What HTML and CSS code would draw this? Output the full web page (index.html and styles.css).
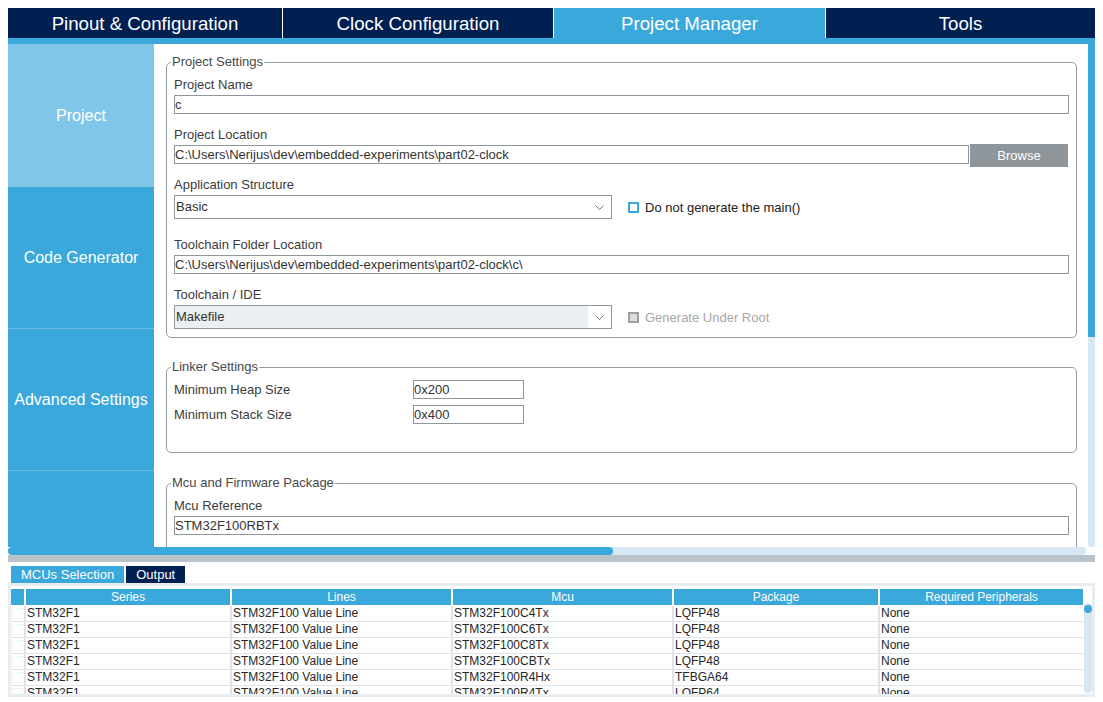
FILE: index.html
```html
<!DOCTYPE html>
<html lang="en">
<head>
<meta charset="utf-8">
<title>Project Manager</title>
<link rel="stylesheet" href="styles.css">
</head>
<body>
<div class="app">
  <nav class="tabs">
    <div class="tab">Pinout &amp; Configuration</div>
    <div class="tab">Clock Configuration</div>
    <div class="tab active">Project Manager</div>
    <div class="tab">Tools</div>
  </nav>
  <div class="strip"></div>

  <div class="workspace">
    <aside class="side">
      <div class="side-item active">Project</div>
      <div class="side-item">Code Generator</div>
      <div class="side-item">Advanced Settings</div>
      <div class="side-item last"></div>
    </aside>

    <main class="panel">
      <fieldset class="fs fs-project">
        <legend>Project Settings</legend>
        <div class="field">
          <label class="lbl">Project Name</label>
          <input class="text" type="text" value="c">
        </div>
        <div class="field">
          <label class="lbl">Project Location</label>
          <div class="row">
            <input class="text grow" type="text" value="C:\Users\Nerijus\dev\embedded-experiments\part02-clock">
            <button class="browse">Browse</button>
          </div>
        </div>
        <div class="field field-tall">
          <label class="lbl">Application Structure</label>
          <div class="option-row">
            <div class="select">
              <span class="select-value">Basic</span>
              <span class="select-arrow"><svg width="9" height="5" viewBox="0 0 9 5"><polyline points="0.5,0.5 4.5,4.5 8.5,0.5" fill="none" stroke="#707070" stroke-width="1"/></svg></span>
            </div>
            <span class="check-label"><span class="check"></span>Do not generate the main()</span>
          </div>
        </div>
        <div class="field">
          <label class="lbl">Toolchain Folder Location</label>
          <input class="text" type="text" value="C:\Users\Nerijus\dev\embedded-experiments\part02-clock\c\">
        </div>
        <div class="field last">
          <label class="lbl">Toolchain / IDE</label>
          <div class="option-row">
            <div class="select disabled">
              <span class="select-value">Makefile</span>
              <span class="select-arrow"><svg width="9" height="5" viewBox="0 0 9 5"><polyline points="0.5,0.5 4.5,4.5 8.5,0.5" fill="none" stroke="#707070" stroke-width="1"/></svg></span>
            </div>
            <span class="check-label off"><span class="check off"></span>Generate Under Root</span>
          </div>
        </div>
      </fieldset>

      <fieldset class="fs fs-linker">
        <legend>Linker Settings</legend>
        <div class="linker">
          <span class="lbl">Minimum Heap Size</span>
          <input class="text" type="text" value="0x200">
          <span class="lbl">Minimum Stack Size</span>
          <input class="text" type="text" value="0x400">
        </div>
      </fieldset>

      <fieldset class="fs fs-mcu">
        <legend>Mcu and Firmware Package</legend>
        <div class="field last">
          <label class="lbl">Mcu Reference</label>
          <input class="text" type="text" value="STM32F100RBTx">
        </div>
      </fieldset>
    </main>

    <div class="vscroll">
      <div class="vthumb"></div>
      <div class="vtrack"></div>
    </div>
  </div>

  <div class="hscroll"><div class="hthumb"></div></div>
  <div class="graybar"></div>

  <section class="bottom">
    <div class="btabs">
      <div class="btab">MCUs Selection</div>
      <div class="btab active">Output</div>
    </div>
    <div class="frame">
      <div class="frame-inner">
        <div class="table">
          <div class="grid thead">
            <div class="th"></div>
            <div class="th">Series</div>
            <div class="th">Lines</div>
            <div class="th">Mcu</div>
            <div class="th">Package</div>
            <div class="th">Required Peripherals</div>
          </div>
          <div class="grid tbody">
            <div class="td chk"><span class="box"></span></div><div class="td">STM32F1</div><div class="td">STM32F100 Value Line</div><div class="td">STM32F100C4Tx</div><div class="td">LQFP48</div><div class="td">None</div>
            <div class="td chk"><span class="box"></span></div><div class="td">STM32F1</div><div class="td">STM32F100 Value Line</div><div class="td">STM32F100C6Tx</div><div class="td">LQFP48</div><div class="td">None</div>
            <div class="td chk"><span class="box"></span></div><div class="td">STM32F1</div><div class="td">STM32F100 Value Line</div><div class="td">STM32F100C8Tx</div><div class="td">LQFP48</div><div class="td">None</div>
            <div class="td chk"><span class="box"></span></div><div class="td">STM32F1</div><div class="td">STM32F100 Value Line</div><div class="td">STM32F100CBTx</div><div class="td">LQFP48</div><div class="td">None</div>
            <div class="td chk"><span class="box"></span></div><div class="td">STM32F1</div><div class="td">STM32F100 Value Line</div><div class="td">STM32F100R4Hx</div><div class="td">TFBGA64</div><div class="td">None</div>
            <div class="td chk"><span class="box"></span></div><div class="td">STM32F1</div><div class="td">STM32F100 Value Line</div><div class="td">STM32F100R4Tx</div><div class="td">LQFP64</div><div class="td">None</div>
          </div>
        </div>
        <div class="tscroll">
          <div class="ttrack"><span class="tdot"></span></div>
        </div>
      </div>
    </div>
  </section>
</div>
</body>
</html>
```

FILE: styles.css
```css
html {
  overflow: hidden;
}

body {
  margin: 8px;
  background: #ffffff;
  font-family: "Liberation Sans", Arial, sans-serif;
  color: #333333;
}

.app {
  width: 1087px;
}

/* Top tabs */
.tabs {
  display: grid;
  grid-template-columns: 274px 270px 271px 1fr;
  column-gap: 1px;
  height: 30px;
  background: #ffffff;
}

.tab {
  background: #002052;
  color: #ffffff;
  font-size: 14pt;
  padding-top: 1px;
  display: flex;
  align-items: center;
  justify-content: center;
  white-space: nowrap;
}

.tab.active {
  background: #3aa8db;
}

.strip {
  height: 6px;
  background: #3aa8db;
}

/* Workspace */
.workspace {
  display: flex;
  height: 503px;
}

.side {
  width: 146px;
  flex: none;
  background: #3aa8db;
  display: flex;
  flex-direction: column;
}

.side-item {
  height: 140px;
  flex: none;
  border-bottom: 1px solid #6bbde5;
  padding-top: 1px;
  box-sizing: content-box;
  color: #ffffff;
  font-size: 16px;
  display: flex;
  align-items: center;
  justify-content: center;
  white-space: nowrap;
}

.side-item.active {
  height: 141px;
  background: #7fc6e9;
  border-bottom-color: #7fc6e9;
}

.side-item.last {
  flex: 1;
  border-bottom: 0;
}

.panel {
  flex: 1;
  min-width: 0;
  background: #ffffff;
  padding: 10px 10px 0 12px;
  overflow: hidden;
}

.vscroll {
  width: 8px;
  flex: none;
  display: flex;
  flex-direction: column;
  background: #ffffff;
}

.vthumb {
  height: 293px;
  margin-left: 1px;
  background: #3aa8db;
}

.vtrack {
  flex: 1;
  margin-left: 1px;
  background: #d7e8f4;
  border-radius: 0 0 4px 4px;
}

/* Fieldsets */
.fs {
  margin: 0;
  min-width: 0;
  border: 1px solid #979ea3;
  border-radius: 5px;
  padding: 7px 7px 8px;
}

.fs legend {
  padding: 0 1px;
  margin-left: -3px;
  font-size: 13px;
  line-height: 16px;
  color: #484848;
}

.fs-linker {
  margin-top: 21px;
  padding-top: 5px;
  padding-bottom: 28px;
}

.fs-mcu {
  margin-top: 22px;
  padding-bottom: 40px;
}

.field {
  margin-bottom: 13px;
}

.field.field-tall {
  margin-bottom: 18px;
}

.field.last {
  margin-bottom: 0;
}

.lbl {
  display: block;
  font-size: 13px;
  line-height: 16px;
  margin-bottom: 2px;
  color: #3c3c3c;
  white-space: nowrap;
}

.linker .lbl {
  margin-bottom: 0;
}

.text {
  display: block;
  width: 100%;
  height: 19px;
  box-sizing: border-box;
  margin: 0;
  border: 1px solid #8e969a;
  border-radius: 0;
  padding: 0 1px 0 0;
  font-family: "Liberation Sans", Arial, sans-serif;
  font-size: 13px;
  color: #333333;
  background: #ffffff;
  outline: none;
}

.row {
  display: flex;
  align-items: flex-start;
}

.text.grow {
  flex: 1;
  width: auto;
  min-width: 0;
}

.browse {
  width: 98px;
  height: 23px;
  margin: -1px 1px -3px 1px;
  padding: 0;
  border: 0;
  background: #8f969b;
  color: #ffffff;
  font-family: "Liberation Sans", Arial, sans-serif;
  font-size: 13px;
}

.option-row {
  display: flex;
  align-items: center;
}

.select {
  display: flex;
  width: 438px;
  height: 24px;
  box-sizing: border-box;
  border: 1px solid #8e969a;
  background: #ffffff;
}

.select-value {
  flex: 1;
  padding-left: 1px;
  font-size: 13px;
  line-height: 22px;
  color: #333333;
}

.select.disabled .select-value {
  background: #eceff1;
}

.select-arrow {
  width: 23px;
  display: flex;
  align-items: center;
  justify-content: center;
}

.check-label {
  margin-left: 16px;
  display: flex;
  align-items: center;
  gap: 6px;
  font-size: 13px;
  color: #222222;
  white-space: nowrap;
}

.check-label.off {
  color: #a6a6a6;
}

.check {
  width: 11px;
  height: 11px;
  box-sizing: border-box;
  border: 2px solid #3aa8db;
  background: #ffffff;
}

.check.off {
  border-color: #9aa0a4;
  background: #dedede;
}

.linker {
  display: grid;
  grid-template-columns: 239px 111px;
  row-gap: 6px;
  align-items: center;
}

/* Scrollbars below workspace */
.hscroll {
  width: 1078px;
  height: 8px;
  background: #d7e8f4;
  border-radius: 4px;
  display: flex;
}

.hthumb {
  width: 605px;
  background: #3aa8db;
  border-radius: 4px;
}

.graybar {
  height: 7px;
  background: #b9c3c9;
}

/* Bottom panel */
.bottom {
  padding-top: 4px;
}

.btabs {
  display: flex;
  gap: 2px;
  padding-left: 3px;
  height: 17px;
}

.btab {
  padding: 0 10px;
  background: #3aa8db;
  color: #ffffff;
  font-size: 13px;
  line-height: 17px;
  white-space: nowrap;
}

.btab.active {
  background: #002052;
}

.frame {
  height: 114px;
  box-sizing: border-box;
  padding: 3px;
  background: #e8edf0;
}

.frame-inner {
  height: 108px;
  box-sizing: border-box;
  padding-top: 3px;
  background: #ffffff;
  display: flex;
  overflow: hidden;
}

.table {
  overflow: hidden;
}

.grid {
  display: grid;
  grid-template-columns: 13px 204px 219px 219px 204px 203px;
  column-gap: 2px;
}

.th {
  height: 16px;
  background: #3aa8db;
  color: #ffffff;
  font-size: 12px;
  line-height: 17px;
  text-align: center;
  white-space: nowrap;
}

.tbody {
  margin-top: 1px;
  row-gap: 1px;
  background: #dde3e7;
}

.td {
  height: 15px;
  background: #ffffff;
  padding-left: 1px;
  font-size: 12px;
  line-height: 15px;
  color: #262626;
  white-space: nowrap;
  overflow: hidden;
}

.td.chk {
  padding-left: 0;
  display: flex;
  align-items: center;
  justify-content: center;
}

.box {
  width: 11px;
  height: 11px;
  box-sizing: border-box;
  border: 1px solid #f1f3f5;
}

.tscroll {
  width: 8px;
  margin-left: 1px;
  padding: 14px 0 1px;
  box-sizing: border-box;
  display: flex;
  flex-direction: column;
}

.ttrack {
  flex: 1;
  background: #d7e8f4;
  border-radius: 4px;
  display: flex;
  justify-content: center;
  align-items: flex-start;
}

.tdot {
  width: 8px;
  height: 8px;
  margin-top: 2px;
  border-radius: 50%;
  background: #3aa8db;
}
```
